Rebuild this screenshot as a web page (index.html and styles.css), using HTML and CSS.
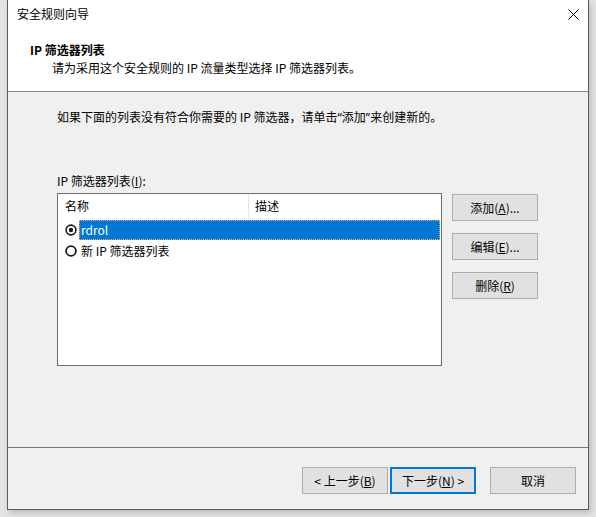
FILE: index.html
```html
<!DOCTYPE html>
<html lang="zh-CN">
<head>
<meta charset="utf-8">
<title>安全规则向导</title>
<link rel="stylesheet" href="styles.css">
</head>
<body>
<div class="window">
  <div class="top">
    <div class="titlebar">
      <span class="title">安全规则向导</span>
      <svg class="close" width="11" height="11" viewBox="0 0 11 11"><path d="M0.5 0.5 L10.5 10.5 M10.5 0.5 L0.5 10.5" stroke="#000" stroke-width="1" fill="none"/></svg>
    </div>
    <div class="heading">IP 筛选器列表</div>
    <div class="subtitle">请为采用这个安全规则的 IP 流量类型选择 IP 筛选器列表。</div>
  </div>
  <div class="content">
    <p class="intro">如果下面的列表没有符合你需要的 IP 筛选器，请单击<span class="q">“</span>添加<span class="q">”</span>来创建新的。</p>
    <div class="label">IP 筛选器列表(<u>I</u>):</div>
    <div class="main">
      <div class="listbox">
        <div class="listhead">
          <div class="col col-name">名称</div>
          <div class="col col-desc">描述</div>
        </div>
        <div class="row">
          <svg class="radio" width="12" height="12" viewBox="0 0 12 12"><circle cx="6" cy="6" r="4.9" fill="#fff" stroke="#1a1a1a" stroke-width="1.6"/><circle cx="6" cy="6" r="2.2" fill="#1a1a1a"/></svg>
          <span class="cell selected">rdrol</span>
        </div>
        <div class="row">
          <svg class="radio" width="12" height="12" viewBox="0 0 12 12"><circle cx="6" cy="6" r="4.9" fill="#fff" stroke="#1a1a1a" stroke-width="1.8"/></svg>
          <span class="cell">新 IP 筛选器列表</span>
        </div>
      </div>
      <div class="sidebtns">
        <button class="btn">添加(<u>A</u>)...</button>
        <button class="btn">编辑(<u>E</u>)...</button>
        <button class="btn">删除(<u>R</u>)</button>
      </div>
    </div>
  </div>
  <div class="footer">
    <button class="btn">&lt; 上一步(<u>B</u>)</button>
    <button class="btn default">下一步(<u>N</u>) &gt;</button>
    <button class="btn cancel">取消</button>
  </div>
</div>
</body>
</html>
```

FILE: styles.css
```css
* { box-sizing: border-box; }
html, body { margin: 0; padding: 0; }
body {
  width: 596px;
  height: 517px;
  background: #e4e4e4;
  font-family: "Noto Sans CJK SC", "Noto Sans", sans-serif;
  font-size: 12px;
  color: #000;
  overflow: hidden;
}
.window {
  margin-left: 7px;
  width: 582px;
  height: 510px;
  border: 1px solid #5c5c5c;
  border-top: none;
  background: #f0f0f0;
  display: flex;
  flex-direction: column;
  box-shadow: 2px 3px 6px rgba(0,0,0,0.18);
}
.top {
  background: #fff;
  height: 92px;
  border-bottom: 1px solid #8a8a8a;
}
.titlebar {
  height: 30px;
  display: flex;
  align-items: center;
  justify-content: space-between;
  padding: 0 9px 2px 9px;
}
.title { line-height: 16px; }
.close { display: block; margin-top: 1px; }
.heading {
  margin-top: 11px;
  padding-left: 22px;
  font-weight: bold;
  line-height: 18px;
}
.subtitle {
  padding-left: 44px;
  line-height: 18px;
}
.content {
  height: 355px;
  padding: 16px 0 0 49px;
}
.intro {
  margin: 0;
  line-height: 18px;
}
.q { font-family: "Noto Sans", sans-serif; }
.label {
  margin-top: 45px;
  line-height: 18px;
}
.main {
  margin-top: 3px;
  display: flex;
  gap: 10px;
}
.listbox {
  width: 385px;
  height: 173px;
  background: #fff;
  border: 1px solid #6e6e6e;
}
.listhead {
  display: flex;
  height: 25px;
}
.col {
  line-height: 24px;
  padding-left: 7px;
}
.col-name {
  width: 191px;
  border-right: 1px solid #e5e5e5;
}
.col-desc { flex: 1; padding-left: 6px; }
.row {
  display: flex;
  align-items: center;
  height: 21px;
  padding-left: 7px;
}
.radio { display: block; flex: none; margin-right: 2px; }
.cell {
  line-height: 18px;
  padding: 0 1px;
  border: 1px solid transparent;
}
.cell.selected {
  flex: 1;
  margin-right: 1px;
  background: #0078d7;
  color: #fff;
  border: 1px dotted #f0b060;
}
.sidebtns {
  margin-top: 1px;
  display: flex;
  flex-direction: column;
  gap: 12px;
}
.btn {
  width: 86px;
  height: 27px;
  padding: 0;
  background: #e1e1e1;
  border: 1px solid #adadad;
  font-family: inherit;
  font-size: 12px;
  color: #000;
  line-height: 16px;
}
.footer {
  flex: 1;
  border-top: 1px solid #7a7a7a;
  display: flex;
  justify-content: flex-end;
  padding: 19px 12px 0 0;
  gap: 2px;
}
.btn.default { border: 2px solid #0078d7; }
.btn.cancel { margin-left: 12px; }
```
